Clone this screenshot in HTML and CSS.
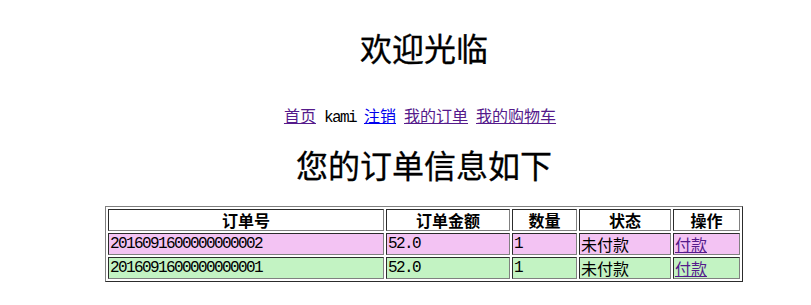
FILE: index.html
```html
<!DOCTYPE html>
<html lang="zh-CN">
<head>
<meta charset="utf-8">
<title>我的订单</title>
<link rel="stylesheet" href="styles.css">
</head>
<body>
<div class="page">
  <h1 class="title">欢迎光临</h1>
  <nav class="nav">
    <a class="visited" href="#">首页</a>
    <span class="mono">kami</span>
    <a class="fresh" href="#">注销</a>
    <a class="visited" href="#">我的订单</a>
    <a class="visited" href="#">我的购物车</a>
  </nav>
  <h1 class="subtitle">您的订单信息如下</h1>
  <table class="orders">
    <colgroup>
      <col class="c1"><col class="c2"><col class="c3"><col class="c4"><col class="c5">
    </colgroup>
    <thead>
      <tr><th>订单号</th><th>订单金额</th><th>数量</th><th>状态</th><th>操作</th></tr>
    </thead>
    <tbody>
      <tr class="pink">
        <td class="mono">2016091600000000002</td>
        <td class="mono">52.0</td>
        <td class="mono">1</td>
        <td>未付款</td>
        <td><a class="visited" href="#">付款</a></td>
      </tr>
      <tr class="green">
        <td class="mono">2016091600000000001</td>
        <td class="mono">52.0</td>
        <td class="mono">1</td>
        <td>未付款</td>
        <td><a class="visited" href="#">付款</a></td>
      </tr>
    </tbody>
  </table>
</div>
</body>
</html>
```

FILE: styles.css
```css
html, body {
  margin: 0;
  padding: 0;
  background: #ffffff;
  overflow: hidden;
}

body {
  font-family: "Noto Sans CJK SC", "Liberation Serif", serif;
  font-size: 16px;
  color: #000000;
}

.page {
  padding-left: 37px;
  display: flex;
  flex-direction: column;
  align-items: center;
}

.title,
.subtitle {
  margin: 0;
  font-size: 32px;
  font-weight: normal;
  line-height: 40px;
  height: 40px;
  text-align: center;
  -webkit-text-stroke: 0.3px #000;
}

.title {
  margin-top: 27px;
}

.nav {
  margin-top: 38px;
  height: 20px;
  line-height: 20px;
  display: flex;
  align-items: baseline;
  gap: 8px;
  padding-right: 8px;
}

.subtitle {
  margin-top: 19px;
}

.mono {
  font-family: "Liberation Mono", "Noto Sans CJK SC", monospace;
  letter-spacing: -1.6px;
}

a.visited {
  color: #551a8b;
}

a.fresh {
  color: #0000ee;
}

.orders {
  margin-top: 22px;
  width: 638px;
  table-layout: fixed;
  border: 1px outset #808080;
  border-spacing: 2px;
}

.c1 { width: 276px; }
.c2 { width: 124px; }
.c3 { width: 65px; }
.c4 { width: 92px; }
.c5 { width: 67px; }

.orders th,
.orders td {
  border: 1px inset #808080;
  padding: 1px;
  height: 18px;
  line-height: 18px;
  white-space: nowrap;
  overflow: hidden;
}

.orders th {
  font-weight: bold;
  text-align: center;
}

.orders td {
  text-align: left;
}

.pink td {
  background: #f3c3f3;
}

.green td {
  background: #c3f3c3;
}
```
